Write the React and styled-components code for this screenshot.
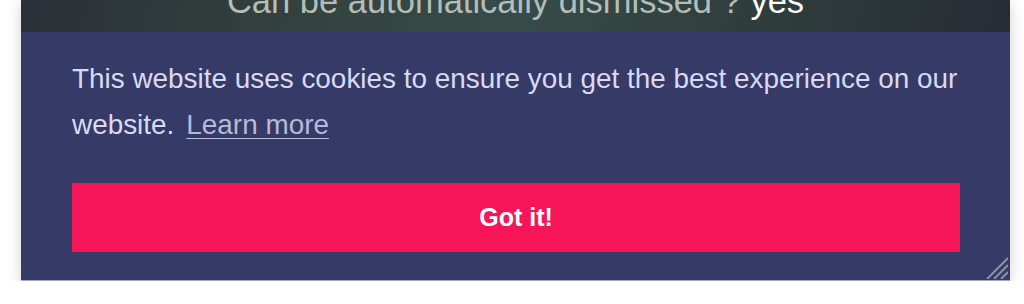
import styled, { createGlobalStyle } from "styled-components";

const Global = createGlobalStyle`
  html, body {
    margin: 0;
    background: #fff;
  }
  body {
    font-family: "Liberation Sans", Arial, sans-serif;
  }
`;

const Page = styled.div`
  padding-left: 21px;
  width: 989px;
`;
const Frame = styled.div`
  position: relative;
  width: 989px;
  border-bottom: 1px solid #a3a6b8;
  box-shadow: 0 3px 14px rgba(0, 0, 0, 0.18);
`;
const TopBar = styled.div`
  height: 32px;
  overflow: hidden;
  background: linear-gradient(100deg, #2a3037 0%, #34433f 30%, #364c48 50%, #2f3d3c 75%, #262c34 100%);
  text-align: center;
`;
const Title = styled.div`
  margin-top: -19px;
  font-size: 34.5px;
  line-height: 40px;
  color: #b3bdb9;
  white-space: nowrap;
`;
const Answer = styled.span`
  color: #fff;
`;
const Banner = styled.div`
  background: #353a66;
  padding: 24px 50px 28px 51px;
`;
const Message = styled.p`
  margin: 0;
  font-size: 27.9px;
  line-height: 46px;
  color: #d9d9f4;
`;
const Link = styled.a`
  display: inline-block;
  padding: 0 4px;
  margin-left: 8px;
  color: #d9d9f4;
  opacity: 0.8;
  text-decoration: underline;
  text-decoration-thickness: 1px;
  text-underline-offset: 4px;
`;
const Button = styled.button`
  display: block;
  width: 100%;
  height: 69px;
  margin-top: 35px;
  border: 0;
  background: #f61559;
  color: #fff;
  font-family: "Liberation Sans", Arial, sans-serif;
  font-weight: 700;
  font-size: 25px;
  cursor: pointer;
`;
const Grip = styled.svg`
  position: absolute;
  right: 2px;
  bottom: 1px;
`;

const App = () => {
  return (
    <>
      <Global />
      <Page>
        <Frame>
          <TopBar>
            <Title>
              Can be automatically dismissed ? <Answer>yes</Answer>
            </Title>
          </TopBar>
          <Banner>
            <Message>
              This website uses cookies to ensure you get the best experience on our website.
              <Link href="#">Learn more</Link>
            </Message>
            <Button>Got it!</Button>
          </Banner>
          <Grip width="22" height="22" viewBox="0 0 22 22">
            <g stroke="#8e91a6" strokeWidth="2">
              <line x1="1" y1="22" x2="22" y2="1" />
              <line x1="8" y1="22" x2="22" y2="8" />
              <line x1="15" y1="22" x2="22" y2="15" />
            </g>
          </Grip>
        </Frame>
      </Page>
    </>
  );
};

export default App;
